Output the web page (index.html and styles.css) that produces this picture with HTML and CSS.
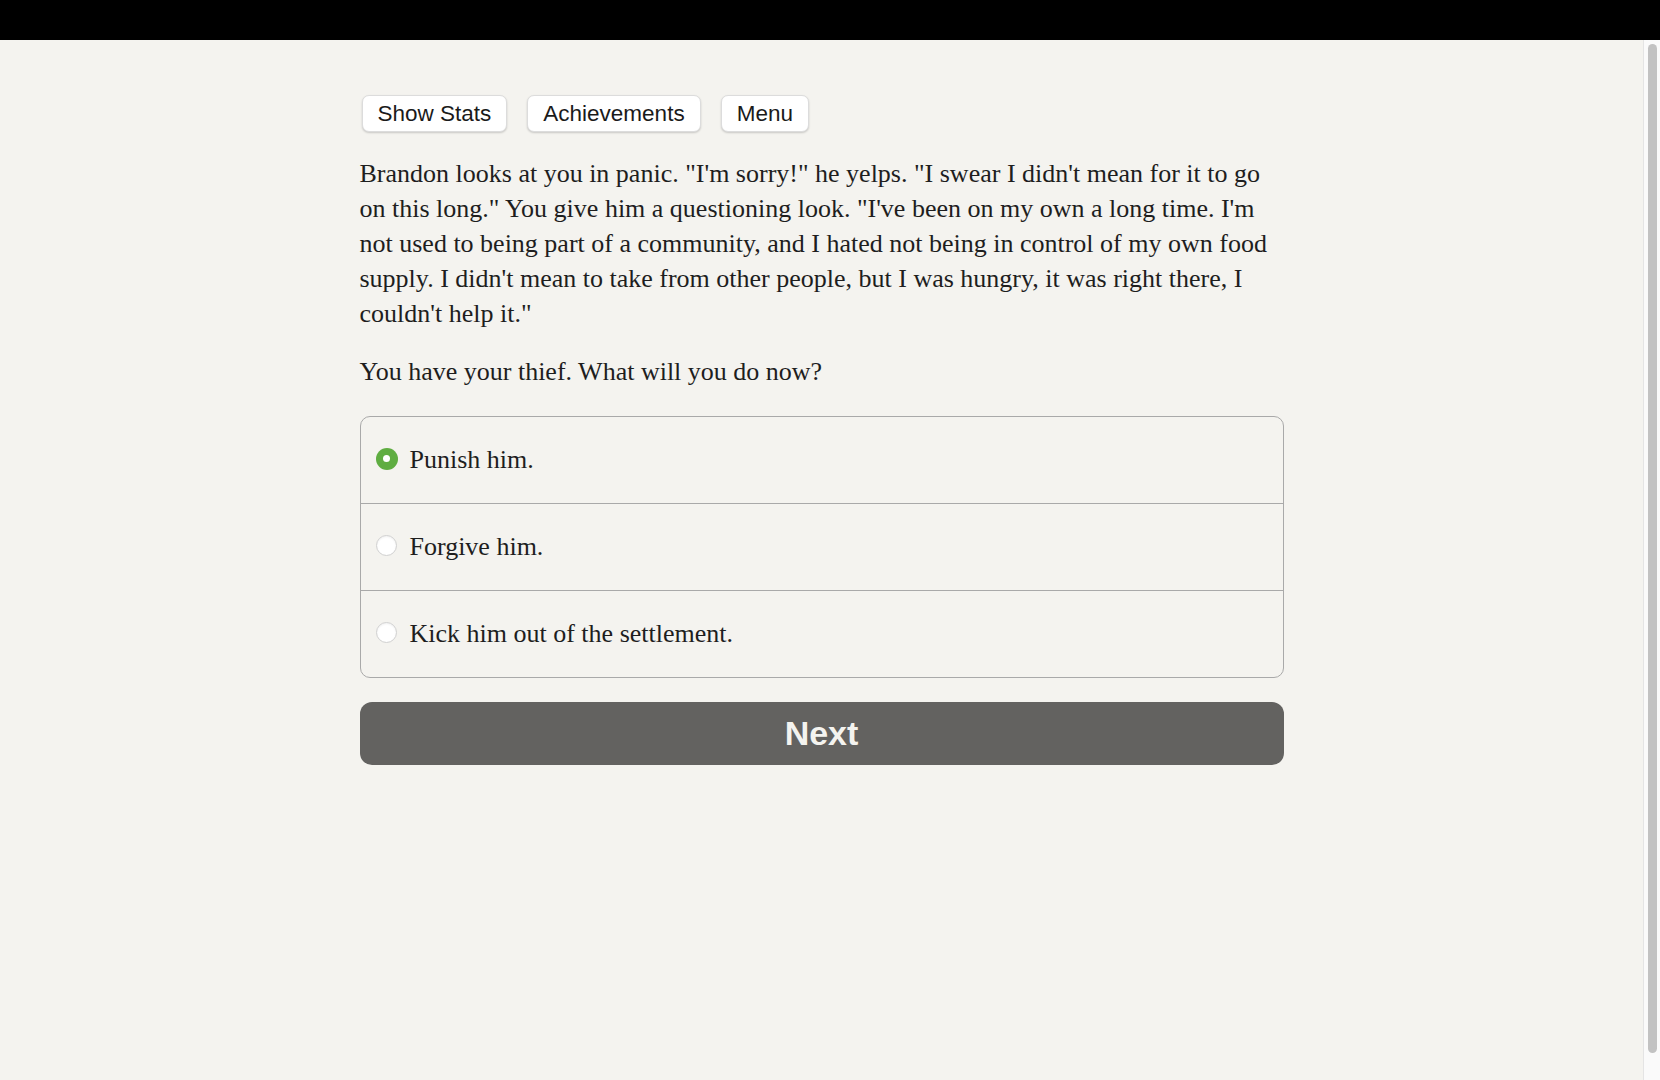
FILE: index.html
```html
<!DOCTYPE html>
<html lang="en">
<head>
<meta charset="utf-8">
<title>Choice</title>
<link rel="stylesheet" href="styles.css">
</head>
<body>
<div class="topbar"></div>
<div class="frame">
  <main class="page">
    <div class="container">
      <nav class="toolbar">
        <button class="tool-btn">Show Stats</button>
        <button class="tool-btn">Achievements</button>
        <button class="tool-btn">Menu</button>
      </nav>
      <div class="story">
        <p>Brandon looks at you in panic. "I'm sorry!" he yelps. "I swear I didn't mean for it to go on this long." You give him a questioning look. "I've been on my own a long time. I'm not used to being part of a community, and I hated not being in control of my own food supply. I didn't mean to take from other people, but I was hungry, it was right there, I couldn't help it."</p>
        <p>You have your thief. What will you do now?</p>
      </div>
      <form class="choices">
        <label class="choice"><input class="radio" type="radio" name="choice" checked><span>Punish him.</span></label>
        <label class="choice"><input class="radio" type="radio" name="choice"><span>Forgive him.</span></label>
        <label class="choice"><input class="radio" type="radio" name="choice"><span>Kick him out of the settlement.</span></label>
      </form>
      <button class="next-btn">Next</button>
    </div>
  </main>
  <div class="scrollbar"><div class="thumb"></div></div>
</div>
</body>
</html>
```

FILE: styles.css
```css
html, body {
  margin: 0;
  padding: 0;
  height: 100%;
  overflow: hidden;
}

body {
  background: #f4f3ef;
  color: #1e1e1e;
  font-family: "Liberation Serif", "Times New Roman", serif;
}

.topbar {
  height: 40px;
  background: #000;
}

.frame {
  display: flex;
  height: 1040px;
}

.page {
  flex: 1;
  min-width: 0;
}

.container {
  width: 924px;
  margin: 0 auto;
  padding-top: 55px;
}

.toolbar {
  display: flex;
  gap: 20px;
  padding-left: 2px;
}

.tool-btn {
  height: 37px;
  padding: 0 15px;
  background: #fff;
  border: 1px solid #dcdcdc;
  border-radius: 7px;
  box-shadow: 0 1px 2px rgba(0, 0, 0, 0.18);
  font-family: "Liberation Sans", Arial, sans-serif;
  font-size: 22.5px;
  color: #1a1a1a;
  cursor: pointer;
}

.story {
  margin-top: 24px;
}

.story p {
  margin: 0 0 23px;
  font-size: 26px;
  line-height: 35px;
}

.choices {
  margin-top: 27px;
  border: 1px solid #a9a9a9;
  border-radius: 10px;
  overflow: hidden;
}

.choice {
  display: flex;
  align-items: center;
  height: 86px;
  padding-left: 15px;
  font-size: 26px;
  cursor: pointer;
}

.choice + .choice {
  border-top: 1px solid #a9a9a9;
}

.radio {
  appearance: none;
  -webkit-appearance: none;
  margin: -3px 13px 0 0;
  width: 21px;
  height: 21px;
  border-radius: 50%;
  background: #fff;
  border: 1px solid #d0d0d0;
  box-shadow: inset 0 1px 2px rgba(0, 0, 0, 0.06);
  position: relative;
  flex: none;
}

.radio:checked {
  width: 22px;
  height: 22px;
  margin-right: 12px;
  background: #5fad41;
  border: none;
  box-shadow: none;
}

.radio:checked::after {
  content: "";
  position: absolute;
  left: 7.5px;
  top: 7.5px;
  width: 7px;
  height: 7px;
  border-radius: 50%;
  background: #fff;
}

.next-btn {
  display: block;
  width: 100%;
  height: 63px;
  margin-top: 24px;
  background: #636260;
  border: none;
  border-radius: 12px;
  color: #f4f3ef;
  font-family: "Liberation Sans", Arial, sans-serif;
  font-weight: bold;
  font-size: 34px;
  cursor: pointer;
}

.scrollbar {
  width: 17px;
  background: #fafafa;
  border-left: 1px solid #e4e4e4;
  padding: 4px 0 0 4px;
  box-sizing: border-box;
}

.thumb {
  width: 9px;
  height: 1009px;
  border-radius: 5px;
  background: #c2c2c2;
}
```
